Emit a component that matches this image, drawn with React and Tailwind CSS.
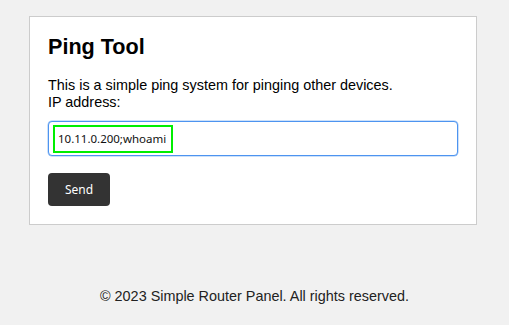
import React from 'react';

const App = () => {
    return (
        <div className="min-h-[325px] w-full bg-[#f1f1f1] pt-4 font-['Liberation_Sans',Arial,sans-serif] text-black">
            {/* Card */}
            <div className="ml-[29px] w-[448px] border border-[#cccccc] bg-white px-[18px] pt-[17px] pb-[18px]">
                <h2 className="mb-[18px] text-[21.6px] leading-[25px] font-bold">Ping Tool</h2>

                <p className="text-[14.4px] leading-[17px]">
                    This is a simple ping system for pinging other devices.
                </p>
                <label className="block text-[14.4px] leading-[17px]">IP address:</label>

                {/* Input (focused) */}
                <div className="mt-[10px] flex h-[35px] w-[410px] items-center rounded-[4px] border-[1.5px] border-[#4d94f0] bg-white pl-[4px] shadow-[0_0_0_0.5px_#9cc3f5]">
                    <span className="flex h-[28px] w-[120px] items-center border-2 border-[#00ee00] pl-[3px] font-['Noto_Sans',sans-serif] text-[11.5px] text-[#111]">
                        10.11.0.200;whoami
                    </span>
                </div>

                <button className="mt-[17px] flex h-[33px] w-[62px] items-center justify-center rounded-[4px] bg-[#333333] font-['Noto_Sans',sans-serif] text-[12px] text-white">
                    Send
                </button>
            </div>

            {/* Footer */}
            <footer className="mt-[63px] text-center text-[14.4px] leading-[17px] text-[#222]">
                © 2023 Simple Router Panel. All rights reserved.
            </footer>
        </div>
    );
};

export default App;
